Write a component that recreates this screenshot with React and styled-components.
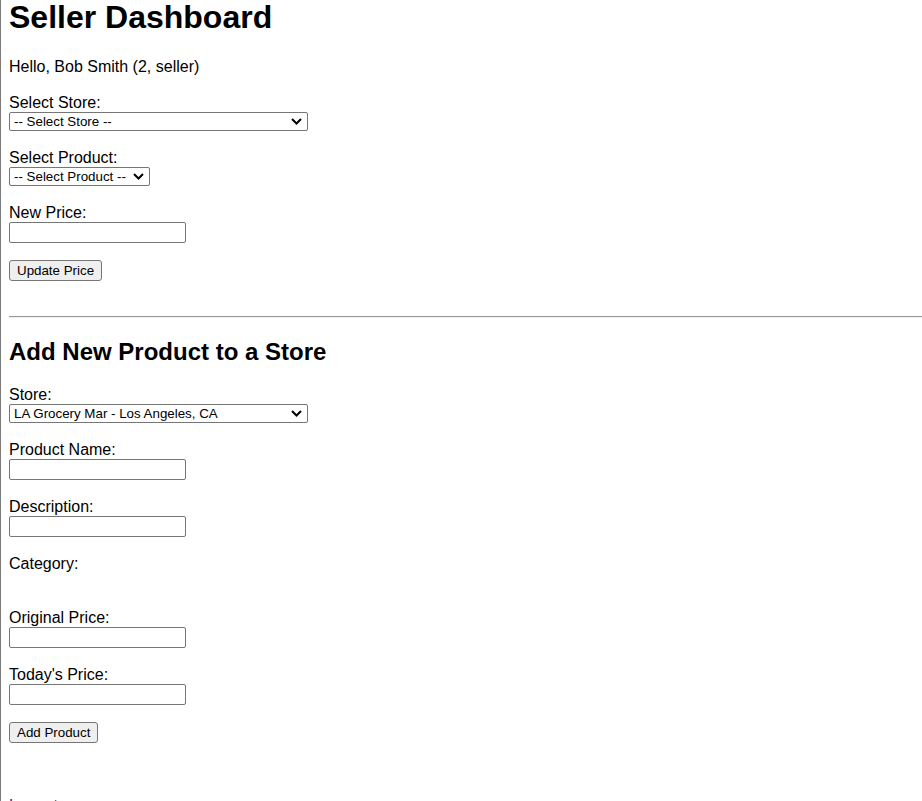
import React from "react";
import styled, { createGlobalStyle } from "styled-components";

const Global = createGlobalStyle`
  html, body {
    margin: 0;
    padding: 0;
    overflow: hidden;
    background: #ffffff;
  }
  body {
    font-family: "Liberation Sans", Arial, sans-serif;
    color: #000000;
  }
`;

const Page = styled.div`
  box-sizing: border-box;
  min-height: 801px;
  border-left: 1px solid #7a7a7a;
  padding: 1px 0 0 8px;
  font-size: 16px;
`;

const Title = styled.h1`
  margin: 0;
  font-size: 32px;
  line-height: 32px;
  font-weight: bold;
`;

const Greeting = styled.p`
  margin: 25px 0 17px;
  line-height: 18px;
`;

const SectionTitle = styled.h2`
  margin: 20px 0 19px;
  font-size: 24px;
  line-height: 28px;
  font-weight: bold;
`;

const Group = styled.div`
  display: flex;
  flex-direction: column;
  align-items: flex-start;
  margin-bottom: 17px;
`;

const Label = styled.label`
  display: block;
  line-height: 19px;
  height: 19px;
  overflow: visible;
`;

const Empty = styled.div`
  height: 18px;
`;

const SelectWrap = styled.div`
  position: relative;
  display: inline-block;
  width: ${(p) => p.$w}px;
  height: 19px;
`;

const Select = styled.select`
  appearance: none;
  -webkit-appearance: none;
  box-sizing: border-box;
  width: 100%;
  height: 19px;
  margin: 0;
  padding: 0 20px 0 4px;
  font-family: "Liberation Sans", Arial, sans-serif;
  font-size: 13.33px;
  line-height: 17px;
  color: #000;
  background: #fff;
  border: 1px solid #767676;
  border-radius: 2px;
`;

const Chevron = styled.svg`
  position: absolute;
  right: 6px;
  top: 6px;
  width: 11px;
  height: 7px;
  pointer-events: none;
`;

const Input = styled.input`
  box-sizing: border-box;
  width: 177px;
  height: 21px;
  margin: 0;
  padding: 1px 2px;
  font-family: "Liberation Sans", Arial, sans-serif;
  font-size: 13.33px;
  background: #fff;
  border: 1px solid #767676;
  border-radius: 2px;
`;

const Button = styled.button`
  box-sizing: border-box;
  height: 21px;
  margin: ${(p) => p.$mt}px 0 0;
  padding: 1px 7px;
  font-family: "Liberation Sans", Arial, sans-serif;
  font-size: 13.33px;
  line-height: 15px;
  color: #000;
  background: #efefef;
  border: 1px solid #767676;
  border-radius: 3px;
  display: block;
`;

const Rule = styled.hr`
  margin: 35px 0 0;
  height: 0;
  border: none;
  border-top: 1px solid #9a9a9a;
  border-bottom: 1px solid #eeeeee;
`;

const LogoutLink = styled.a`
  display: block;
  margin-top: 54px;
  line-height: 18px;
  color: #551a8b;
  text-decoration: underline;
`;

function Dropdown({ width, value, children }) {
  return (
    <SelectWrap $w={width}>
      <Select defaultValue={value}>{children}</Select>
      <Chevron viewBox="0 0 11 7" aria-hidden="true">
        <path d="M1 1 L5.5 5.5 L10 1" fill="none" stroke="#000" strokeWidth="2" />
      </Chevron>
    </SelectWrap>
  );
}

export default function App() {
  return (
    <>
      <Global />
      <Page>
        <Title>Seller Dashboard</Title>
        <Greeting>Hello, Bob Smith (2, seller)</Greeting>

        <Group>
          <Label>Select Store:</Label>
          <Dropdown width={299} value="">
            <option value="">-- Select Store --</option>
          </Dropdown>
        </Group>
        <Group>
          <Label>Select Product:</Label>
          <Dropdown width={141} value="">
            <option value="">-- Select Product --</option>
          </Dropdown>
        </Group>
        <Group>
          <Label>New Price:</Label>
          <Input type="text" />
        </Group>
        <Button $mt={2}>Update Price</Button>

        <Rule />
        <SectionTitle>Add New Product to a Store</SectionTitle>

        <Group>
          <Label>Store:</Label>
          <Dropdown width={299} value="1">
            <option value="1">LA Grocery Mar - Los Angeles, CA</option>
          </Dropdown>
        </Group>
        <Group>
          <Label>Product Name:</Label>
          <Input type="text" />
        </Group>
        <Group>
          <Label>Description:</Label>
          <Input type="text" />
        </Group>
        <Group>
          <Label>Category:</Label>
          <Empty />
        </Group>
        <Group>
          <Label>Original Price:</Label>
          <Input type="text" />
        </Group>
        <Group>
          <Label>Today's Price:</Label>
          <Input type="text" />
        </Group>
        <Button $mt={4}>Add Product</Button>

        <LogoutLink href="#">Logout</LogoutLink>
      </Page>
    </>
  );
}
